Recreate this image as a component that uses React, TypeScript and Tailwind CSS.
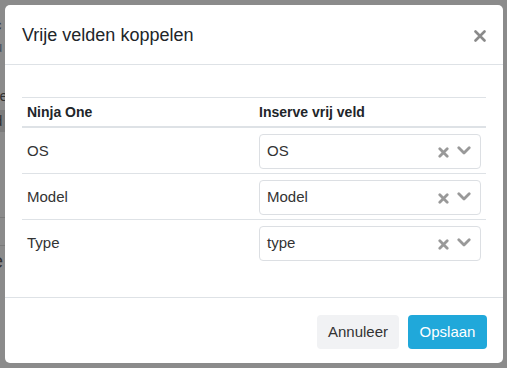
import React from "react";

const rows = [
  { label: "OS", value: "OS" },
  { label: "Model", value: "Model" },
  { label: "Type", value: "type" },
];

function SelectBox({ value }: { value: string }) {
  return (
    <div className="h-[35px] w-full rounded-[4px] border border-[#dcdfe3] bg-white flex items-center pl-[7px] pr-[9px]">
      <span className="flex-1 text-[15px] text-[#333]">{value}</span>
      <svg width="11" height="11" viewBox="0 0 11 11" className="mr-[8px] mt-[2px]">
        <path d="M1.8 1.8 L9.2 9.2 M9.2 1.8 L1.8 9.2" stroke="#999" strokeWidth="2.8" strokeLinecap="round" />
      </svg>
      <svg width="14" height="9" viewBox="0 0 14 9" className="-mt-[2px]">
        <path d="M1.8 1.8 L7 7 L12.2 1.8" fill="none" stroke="#999" strokeWidth="2.8" strokeLinecap="round" strokeLinejoin="round" />
      </svg>
    </div>
  );
}

export default function App() {
  return (
    <div
      className="relative w-[507px] h-[368px] overflow-hidden bg-[#8b8b8b]"
      style={{ fontFamily: '"Liberation Sans", Arial, sans-serif' }}
    >
      {/* page behind the overlay */}
      <div className="flex flex-col -ml-[6px] pt-[14px] text-[15px] text-[#333]">
        <div className="h-[22px]">c</div>
        <div className="h-[49px] text-[#4a5560]">u</div>
        <div className="h-[25px] -ml-[2px]">ve</div>
        <div className="h-[22px] bg-[#7c7c7c] w-[12px]">d</div>
        <div className="h-[86px] border-b border-[#7a7a7a] w-[12px]" />
        <div className="h-[28px] border-b border-[#7a7a7a] w-[12px]" />
        <div className="text-[20px] -ml-[2px]">e</div>
      </div>

      {/* modal */}
      <div className="absolute left-[5px] top-[5px] w-[498px] h-[358px] rounded-[5px] bg-white flex flex-col">
        <div className="h-[60px] border-b border-[#dee2e6] flex items-center justify-between pl-[17px] pr-[17px] pt-[2px]">
          <h2 className="text-[18px] text-[#212529]">Vrije velden koppelen</h2>
          <svg width="12" height="12" viewBox="0 0 12 12">
            <path d="M1.5 1.5 L10.5 10.5 M10.5 1.5 L1.5 10.5" stroke="#8a8a8a" strokeWidth="2.6" strokeLinecap="round" />
          </svg>
        </div>

        <div className="flex-1 px-[17px] pt-[32px]">
          <div className="w-[464px]">
            <div className="grid grid-cols-[232px_1fr] h-[31px] pt-[1px] border-t border-b-2 border-[#dee2e6] items-center text-[14px] font-bold text-[#212529]">
              <div className="pl-[5px]">Ninja One</div>
              <div className="pl-[5px]">Inserve vrij veld</div>
            </div>
            {rows.map((r, i) => (
              <div
                key={r.label}
                className={
                  "grid grid-cols-[232px_1fr] h-[46px] items-center pt-[1px] " +
                  (i < rows.length - 1 ? "border-b border-[#dee2e6]" : "")
                }
              >
                <div className="pl-[5px] text-[15px] text-[#333]">{r.label}</div>
                <div className="px-[5px]">
                  <SelectBox value={r.value} />
                </div>
              </div>
            ))}
          </div>
        </div>

        <div className="h-[66px] border-t border-[#dee2e6] flex justify-end items-start gap-[9px] pt-[17px] pr-[16px]">
          <button className="h-[34px] w-[82px] rounded-[4px] bg-[#f1f2f4] text-[15px] text-[#333]">
            Annuleer
          </button>
          <button className="h-[34px] w-[79px] rounded-[4px] bg-[#20a8da] text-[15px] text-white">
            Opslaan
          </button>
        </div>
      </div>
    </div>
  );
}
